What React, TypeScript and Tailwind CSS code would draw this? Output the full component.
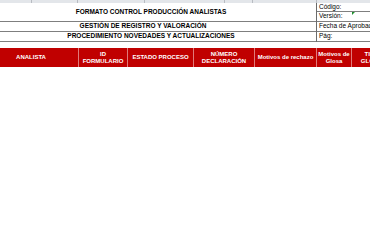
import React from "react";

const columns = [
  { w: "w-[79px] pr-[16px]", lines: ["ANALISTA"] },
  { w: "w-[49px]", lines: ["ID", "FORMULARIO"] },
  { w: "w-[66px]", lines: ["ESTADO PROCESO"] },
  { w: "w-[61px]", lines: ["NÚMERO", "DECLARACIÓN"] },
  { w: "w-[62px]", lines: ["Motivos de rechazo"] },
  { w: "w-[35px]", lines: ["Motivos de", "Glosa"] },
  { w: "w-[40px]", lines: ["TIPO", "GLOSA"] },
];

export default function App() {
  return (
    <div className="w-[370px] h-[250px] overflow-hidden bg-white font-['Liberation_Sans',Arial,sans-serif] text-black">
      {/* hoja: franja de columnas */}
      <div className="flex h-[3px] bg-[#e3e6ea]">
        <div className="w-[32px] border-r border-[#b8bcc2]" />
        <div className="w-[46px] border-r border-[#b8bcc2]" />
        <div className="w-[67px] border-r border-[#b8bcc2]" />
        <div className="w-[80px] border-r border-[#b8bcc2]" />
        <div className="w-[28px] border-r border-[#b8bcc2]" />
        <div className="w-[64px] border-r border-[#b8bcc2]" />
        <div className="flex-1" />
      </div>

      {/* encabezado del formato */}
      <div className="flex">
        <div className="w-[317px] border-r border-[#6b6b6b] font-bold text-[6.5px] leading-none">
          <div className="h-[19px] border-b border-[#7f7f7f] flex items-center justify-center pr-[14px]">
            FORMATO CONTROL PRODUCCIÓN ANALISTAS
          </div>
          <div className="h-[10px] border-b border-[#7f7f7f] flex items-center justify-center pr-[30px]">
            GESTIÓN DE REGISTRO Y VALORACIÓN
          </div>
          <div className="h-[10px] border-b border-[#7f7f7f] flex items-center justify-center pr-[14px]">
            PROCEDIMIENTO NOVEDADES Y ACTUALIZACIONES
          </div>
        </div>
        <div className="flex-1 text-[6.5px] leading-none whitespace-nowrap overflow-hidden">
          <div className="h-[9px] border-b border-[#7f7f7f] flex items-center pl-[2px]">Código:</div>
          <div className="relative h-[10px] border-b border-[#7f7f7f] flex items-center pl-[2px]">
            Versión:
            <span className="absolute left-[35px] top-[0px] w-0 h-0 border-t-[3px] border-t-[#1f8f2f] border-r-[3px] border-r-transparent" />
          </div>
          <div className="h-[10px] border-b border-[#7f7f7f] flex items-center pl-[2px]">Fecha de Aprobación:</div>
          <div className="h-[10px] border-b border-[#7f7f7f] flex items-center pl-[2px]">Pág:</div>
        </div>
      </div>

      {/* cabecera de la tabla */}
      <div className="mt-[6px] flex h-[19px] bg-[#c00000] text-white font-bold text-[6px] leading-[7px] whitespace-nowrap">
        {columns.map((c, i) => (
          <div
            key={i}
            className={`${c.w} shrink-0 flex flex-col items-center justify-center border-r border-[#e07a7a]`}
          >
            {c.lines.map((l) => (
              <span key={l}>{l}</span>
            ))}
          </div>
        ))}
      </div>
    </div>
  );
}
